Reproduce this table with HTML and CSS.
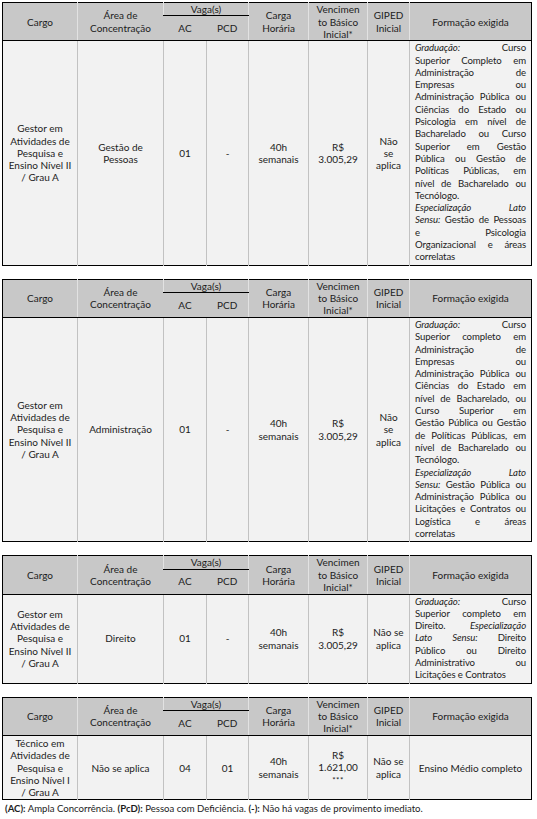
FILE: index.html
```html
<!DOCTYPE html>
<html lang="pt-BR">
<head>
<meta charset="utf-8">
<title>Quadro de vagas</title>
<link rel="stylesheet" href="styles.css">
</head>
<body>
<div class="page">

<table class="tbl">
  <colgroup>
    <col class="c-cargo"><col class="c-area"><col class="c-ac"><col class="c-pcd"><col class="c-carga"><col class="c-venc"><col class="c-giped"><col class="c-form">
  </colgroup>
  <thead>
    <tr class="h1">
      <th rowspan="2">Cargo</th>
      <th rowspan="2">Área de<br>Concentração</th>
      <th colspan="2" class="vaga">Vaga(s)</th>
      <th rowspan="2">Carga<br>Horária</th>
      <th rowspan="2">Vencimen<br>to Básico<br>Inicial*</th>
      <th rowspan="2">GIPED<br>Inicial</th>
      <th rowspan="2">Formação exigida</th>
    </tr>
    <tr class="h2"><th>AC</th><th>PCD</th></tr>
  </thead>
  <tbody>
    <tr>
      <td>Gestor em<br>Atividades de<br>Pesquisa e<br>Ensino Nível II<br>/ Grau A</td>
      <td>Gestão de<br>Pessoas</td>
      <td>01</td>
      <td>-</td>
      <td>40h<br>semanais</td>
      <td>R$<br>3.005,29</td>
      <td>Não<br>se<br>aplica</td>
      <td class="form">
        <span class="ln"><i>Graduação:</i> Curso</span>
        <span class="ln">Superior Completo em</span>
        <span class="ln">Administração de</span>
        <span class="ln">Empresas ou</span>
        <span class="ln">Administração Pública ou</span>
        <span class="ln">Ciências do Estado ou</span>
        <span class="ln">Psicologia em nível de</span>
        <span class="ln">Bacharelado ou Curso</span>
        <span class="ln">Superior em Gestão</span>
        <span class="ln">Pública ou Gestão de</span>
        <span class="ln">Políticas Públicas, em</span>
        <span class="ln">nível de Bacharelado ou</span>
        <span class="ln end">Tecnólogo.</span>
        <span class="ln"><i>Especialização Lato</i></span>
        <span class="ln"><i>Sensu:</i> Gestão de Pessoas</span>
        <span class="ln">e Psicologia</span>
        <span class="ln">Organizacional e áreas</span>
        <span class="ln end">correlatas</span>
      </td>
    </tr>
  </tbody>
</table>

<table class="tbl">
  <colgroup>
    <col class="c-cargo"><col class="c-area"><col class="c-ac"><col class="c-pcd"><col class="c-carga"><col class="c-venc"><col class="c-giped"><col class="c-form">
  </colgroup>
  <thead>
    <tr class="h1">
      <th rowspan="2">Cargo</th>
      <th rowspan="2">Área de<br>Concentração</th>
      <th colspan="2" class="vaga">Vaga(s)</th>
      <th rowspan="2">Carga<br>Horária</th>
      <th rowspan="2">Vencimen<br>to Básico<br>Inicial*</th>
      <th rowspan="2">GIPED<br>Inicial</th>
      <th rowspan="2">Formação exigida</th>
    </tr>
    <tr class="h2"><th>AC</th><th>PCD</th></tr>
  </thead>
  <tbody>
    <tr>
      <td>Gestor em<br>Atividades de<br>Pesquisa e<br>Ensino Nível II<br>/ Grau A</td>
      <td>Administração</td>
      <td>01</td>
      <td>-</td>
      <td>40h<br>semanais</td>
      <td>R$<br>3.005,29</td>
      <td>Não<br>se<br>aplica</td>
      <td class="form">
        <span class="ln"><i>Graduação:</i> Curso</span>
        <span class="ln">Superior completo em</span>
        <span class="ln">Administração de</span>
        <span class="ln">Empresas ou</span>
        <span class="ln">Administração Pública ou</span>
        <span class="ln">Ciências do Estado em</span>
        <span class="ln">nível de Bacharelado, ou</span>
        <span class="ln">Curso Superior em</span>
        <span class="ln">Gestão Pública ou Gestão</span>
        <span class="ln">de Políticas Públicas, em</span>
        <span class="ln">nível de Bacharelado ou</span>
        <span class="ln end">Tecnólogo.</span>
        <span class="ln"><i>Especialização Lato</i></span>
        <span class="ln"><i>Sensu:</i> Gestão Pública ou</span>
        <span class="ln">Administração Pública ou</span>
        <span class="ln">Licitações e Contratos ou</span>
        <span class="ln">Logística e áreas</span>
        <span class="ln end">correlatas</span>
      </td>
    </tr>
  </tbody>
</table>

<table class="tbl">
  <colgroup>
    <col class="c-cargo"><col class="c-area"><col class="c-ac"><col class="c-pcd"><col class="c-carga"><col class="c-venc"><col class="c-giped"><col class="c-form">
  </colgroup>
  <thead>
    <tr class="h1">
      <th rowspan="2">Cargo</th>
      <th rowspan="2">Área de<br>Concentração</th>
      <th colspan="2" class="vaga">Vaga(s)</th>
      <th rowspan="2">Carga<br>Horária</th>
      <th rowspan="2">Vencimen<br>to Básico<br>Inicial*</th>
      <th rowspan="2">GIPED<br>Inicial</th>
      <th rowspan="2">Formação exigida</th>
    </tr>
    <tr class="h2"><th>AC</th><th>PCD</th></tr>
  </thead>
  <tbody>
    <tr>
      <td>Gestor em<br>Atividades de<br>Pesquisa e<br>Ensino Nível II<br>/ Grau A</td>
      <td>Direito</td>
      <td>01</td>
      <td>-</td>
      <td>40h<br>semanais</td>
      <td>R$<br>3.005,29</td>
      <td>Não se<br>aplica</td>
      <td class="form">
        <span class="ln"><i>Graduação:</i> Curso</span>
        <span class="ln">Superior completo em</span>
        <span class="ln">Direito. <i>Especialização</i></span>
        <span class="ln"><i>Lato Sensu:</i> Direito</span>
        <span class="ln">Público ou Direito</span>
        <span class="ln">Administrativo ou</span>
        <span class="ln end">Licitações e Contratos</span>
      </td>
    </tr>
  </tbody>
</table>

<div class="last">
<table class="tbl">
  <colgroup>
    <col class="c-cargo"><col class="c-area"><col class="c-ac"><col class="c-pcd"><col class="c-carga"><col class="c-venc"><col class="c-giped"><col class="c-form">
  </colgroup>
  <thead>
    <tr class="h1">
      <th rowspan="2">Cargo</th>
      <th rowspan="2">Área de<br>Concentração</th>
      <th colspan="2" class="vaga">Vaga(s)</th>
      <th rowspan="2">Carga<br>Horária</th>
      <th rowspan="2">Vencimen<br>to Básico<br>Inicial*</th>
      <th rowspan="2">GIPED<br>Inicial</th>
      <th rowspan="2">Formação exigida</th>
    </tr>
    <tr class="h2"><th>AC</th><th>PCD</th></tr>
  </thead>
  <tbody>
    <tr>
      <td>Técnico em<br>Atividades de<br>Pesquisa e<br>Ensino Nível I<br>/ Grau A</td>
      <td>Não se aplica</td>
      <td>04</td>
      <td>01</td>
      <td>40h<br>semanais</td>
      <td>R$<br>1.621,00<br><span class="stars">***</span></td>
      <td>Não se<br>aplica</td>
      <td>Ensino Médio completo</td>
    </tr>
  </tbody>
</table>
<p class="note"><b>(AC):</b> Ampla Concorrência. <b>(PcD):</b> Pessoa com Deficiência. <b>(-):</b> Não há vagas de provimento imediato.</p>
</div>

</div>
</body>
</html>
```

FILE: styles.css
```css
html, body {
  margin: 0;
  background: #ffffff;
}

body {
  font-family: Lato, "Open Sans", "Liberation Sans", sans-serif;
  color: #1c1c1c;
}

.page {
  display: flex;
  flex-direction: column;
  gap: 13px;
  padding: 2px 0 0 2px;
}

.tbl {
  border-collapse: collapse;
  table-layout: fixed;
  width: 529px;
  border: 1.5px solid #000;
  font-size: 10px;
  line-height: 12.3px;
}

.c-cargo { width: 75px; }
.c-area  { width: 86px; }
.c-ac    { width: 43px; }
.c-pcd   { width: 42px; }
.c-carga { width: 60px; }
.c-venc  { width: 59px; }
.c-giped { width: 42px; }
.c-form  { width: 122px; }

.tbl th {
  background: #c8c8c8;
  font-weight: normal;
  text-align: center;
  vertical-align: middle;
  padding: 0 2px;
  border-left: 1px solid #e2e2e2;
  border-bottom: 1px solid #000;
}

.tbl th:first-child {
  border-left: none;
}

.tbl .h1 .vaga {
  height: 12px;
  padding: 0;
}

.tbl .h2 th {
  height: 24px;
  border-left: none;
}

.tbl td {
  background: #f2f2f2;
  text-align: center;
  vertical-align: middle;
  padding: 1px 2px;
  border-left: 1px solid #c2c2c2;
}

.tbl td:first-child {
  border-left: none;
}

.tbl td.form {
  text-align: left;
  padding: 1px 5px 1px 5px;
  font-size: 9.6px;
  letter-spacing: -0.1px;
}

.ln {
  display: block;
  text-align: justify;
  text-align-last: justify;
}

.ln.end {
  text-align-last: left;
}

.stars {
  font-size: 8px;
  letter-spacing: 0.5px;
}

.last {
  display: flex;
  flex-direction: column;
}

.note {
  margin: 3px 0 0 3px;
  font-size: 9.6px;
  line-height: 12px;
}
```
